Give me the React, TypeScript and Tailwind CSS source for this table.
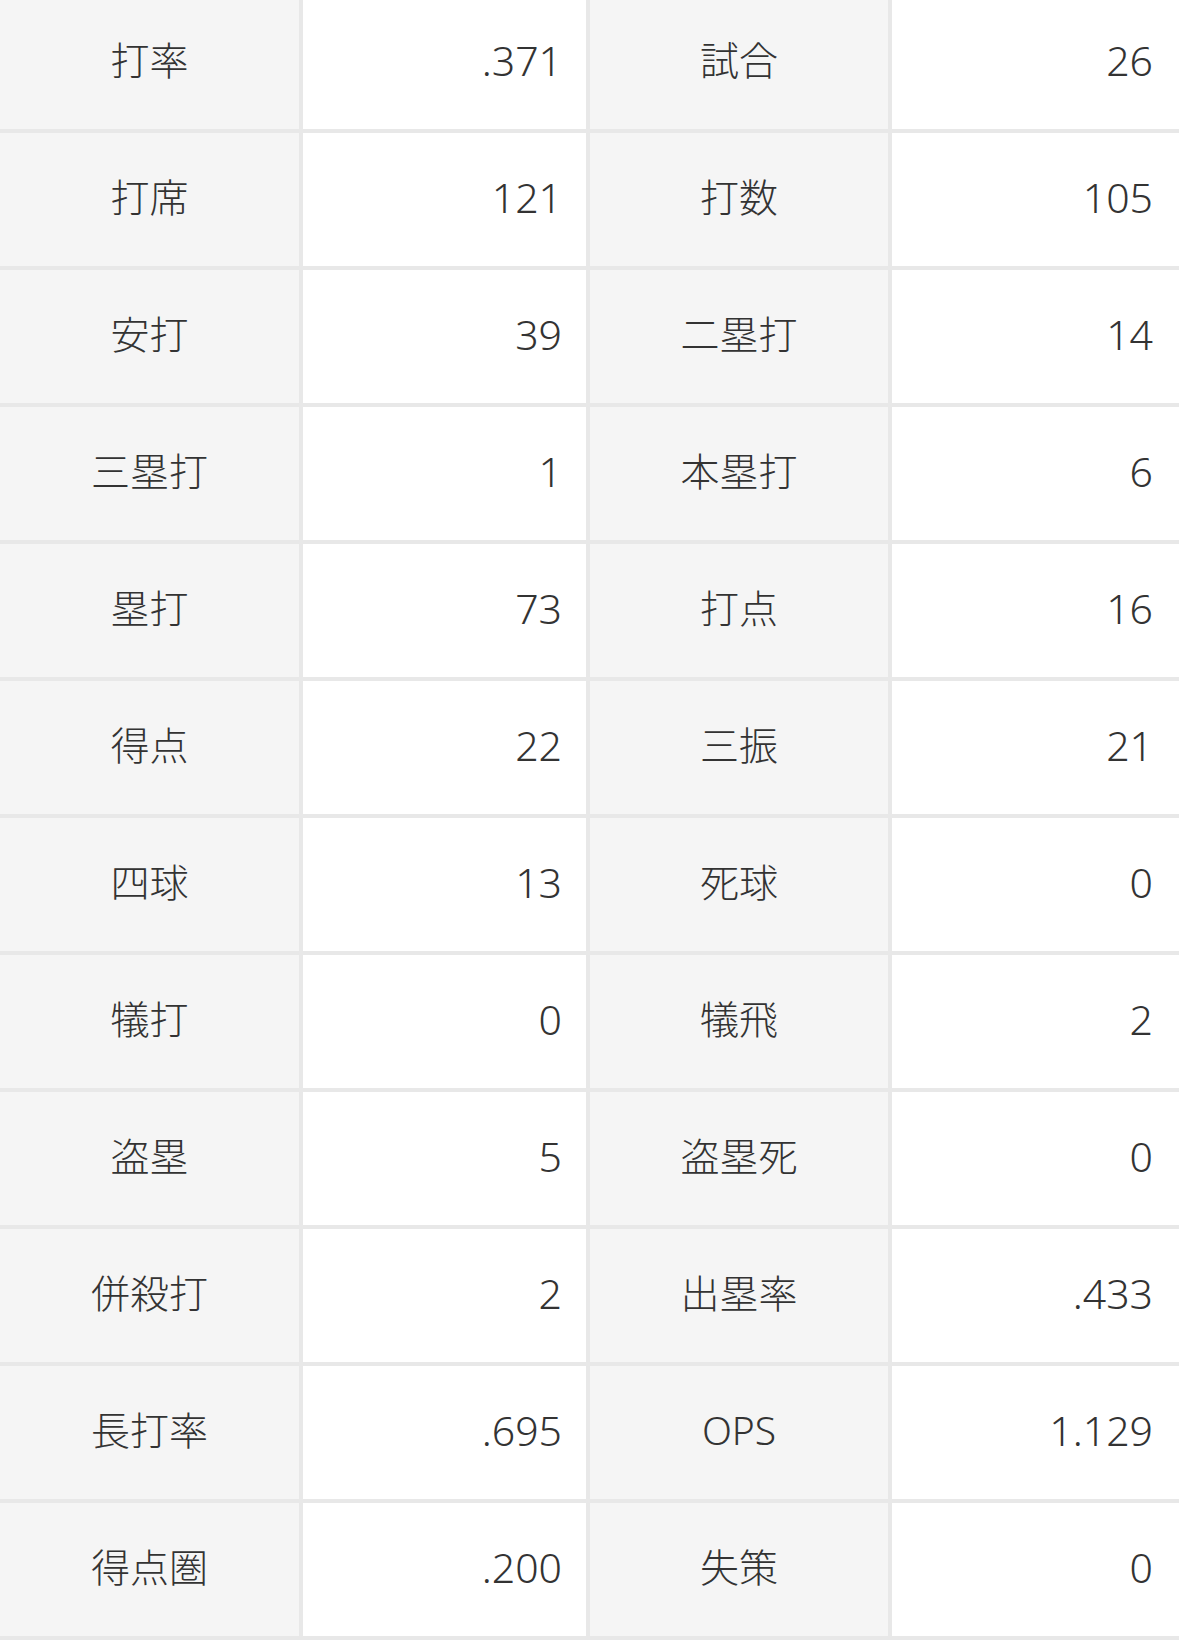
const rows: [string, string, string, string][] = [
  ["打率", ".371", "試合", "26"],
  ["打席", "121", "打数", "105"],
  ["安打", "39", "二塁打", "14"],
  ["三塁打", "1", "本塁打", "6"],
  ["塁打", "73", "打点", "16"],
  ["得点", "22", "三振", "21"],
  ["四球", "13", "死球", "0"],
  ["犠打", "0", "犠飛", "2"],
  ["盗塁", "5", "盗塁死", "0"],
  ["併殺打", "2", "出塁率", ".433"],
  ["長打率", ".695", "OPS", "1.129"],
  ["得点圏", ".200", "失策", "0"],
];

export default function App() {
  return (
    <div className="w-[1179px] h-[1643px] overflow-hidden bg-white font-['Noto_Sans','Noto_Sans_CJK_JP',sans-serif] font-light text-[39px] text-[#333333]">
      <div className="-mt-[4px]">
        {rows.map(([l1, v1, l2, v2]) => (
          <div
            key={l1}
            className="grid grid-cols-[303px_287px_302px_1fr] h-[137px] border-b-4 border-[#e8e8e8]"
          >
            <div className="flex items-center justify-center pb-[4px] bg-[#f5f5f5] border-r-4 border-[#e8e8e8]">
              {l1}
            </div>
            <div className="flex items-center justify-end pb-[4px] pr-[24px] bg-white border-r-4 border-[#e8e8e8] text-[41px]">
              {v1}
            </div>
            <div className="flex items-center justify-center pb-[4px] bg-[#f5f5f5] border-r-4 border-[#e8e8e8]">
              {l2}
            </div>
            <div className="flex items-center justify-end pb-[4px] pr-[26px] bg-white text-[41px]">
              {v2}
            </div>
          </div>
        ))}
      </div>
    </div>
  );
}
